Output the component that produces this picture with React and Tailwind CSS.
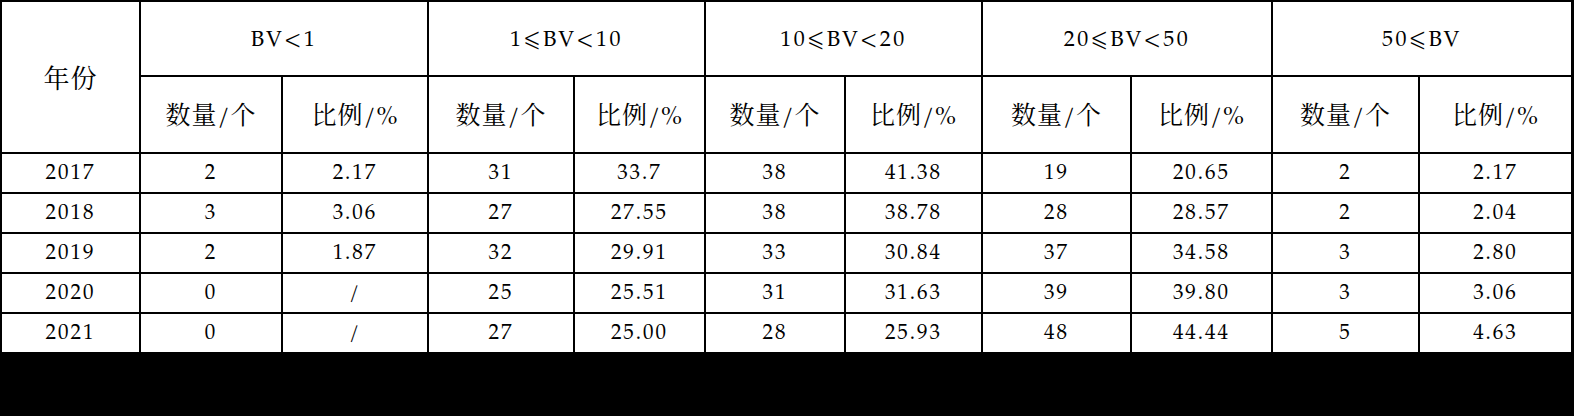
const ROWS = [
  ['2017', '2', '2.17', '31', '33.7', '38', '41.38', '19', '20.65', '2', '2.17'],
  ['2018', '3', '3.06', '27', '27.55', '38', '38.78', '28', '28.57', '2', '2.04'],
  ['2019', '2', '1.87', '32', '29.91', '33', '30.84', '37', '34.58', '3', '2.80'],
  ['2020', '0', '/', '25', '25.51', '31', '31.63', '39', '39.80', '3', '3.06'],
  ['2021', '0', '/', '27', '25.00', '28', '25.93', '48', '44.44', '5', '4.63'],
]

const RANGES = ['BV<1', '1⩽BV<10', '10⩽BV<20', '20⩽BV<50', '50⩽BV']

const font = { fontFamily: '"Palatino Linotype", "Book Antiqua", Palatino, P052, "TeX Gyre Pagella", "Liberation Serif", "Noto Serif CJK SC", "Noto Sans CJK SC", serif' }

export default function App() {
  return (
    <div className="w-[1574px] h-[416px] bg-black text-black" style={font}>
      <div className="w-[1573px] grid grid-cols-[137px_140px_144px_144px_129px_138px_135px_147px_139px_145px_151px] grid-rows-[73px_75px_38px_38px_38px_38px_38px] gap-[2px] pt-[2px] px-[2px]">
        <div className="row-span-2 bg-white flex items-center justify-center pt-[10px] text-[26px] tracking-[1px]">年份</div>
        {RANGES.map(r => (
          <div key={r} className="col-span-2 bg-white flex items-center justify-center pt-[6px] text-[22px] tracking-[2.5px]">{r}</div>
        ))}
        {RANGES.map(r => (
          <div key={r} className="contents">
            <div className="bg-white flex items-center justify-center pt-[8px] text-[25px] tracking-[1px]">数量/个</div>
            <div className="bg-white flex items-center justify-center pt-[8px] text-[25px] tracking-[1px]">比例/%</div>
          </div>
        ))}
        {ROWS.map(row => row.map((v, i) => (
          <div key={row[0] + i} className="bg-white flex items-center justify-center pt-[4px] text-[21px] tracking-[2px]">{v}</div>
        )))}
      </div>
    </div>
  )
}
